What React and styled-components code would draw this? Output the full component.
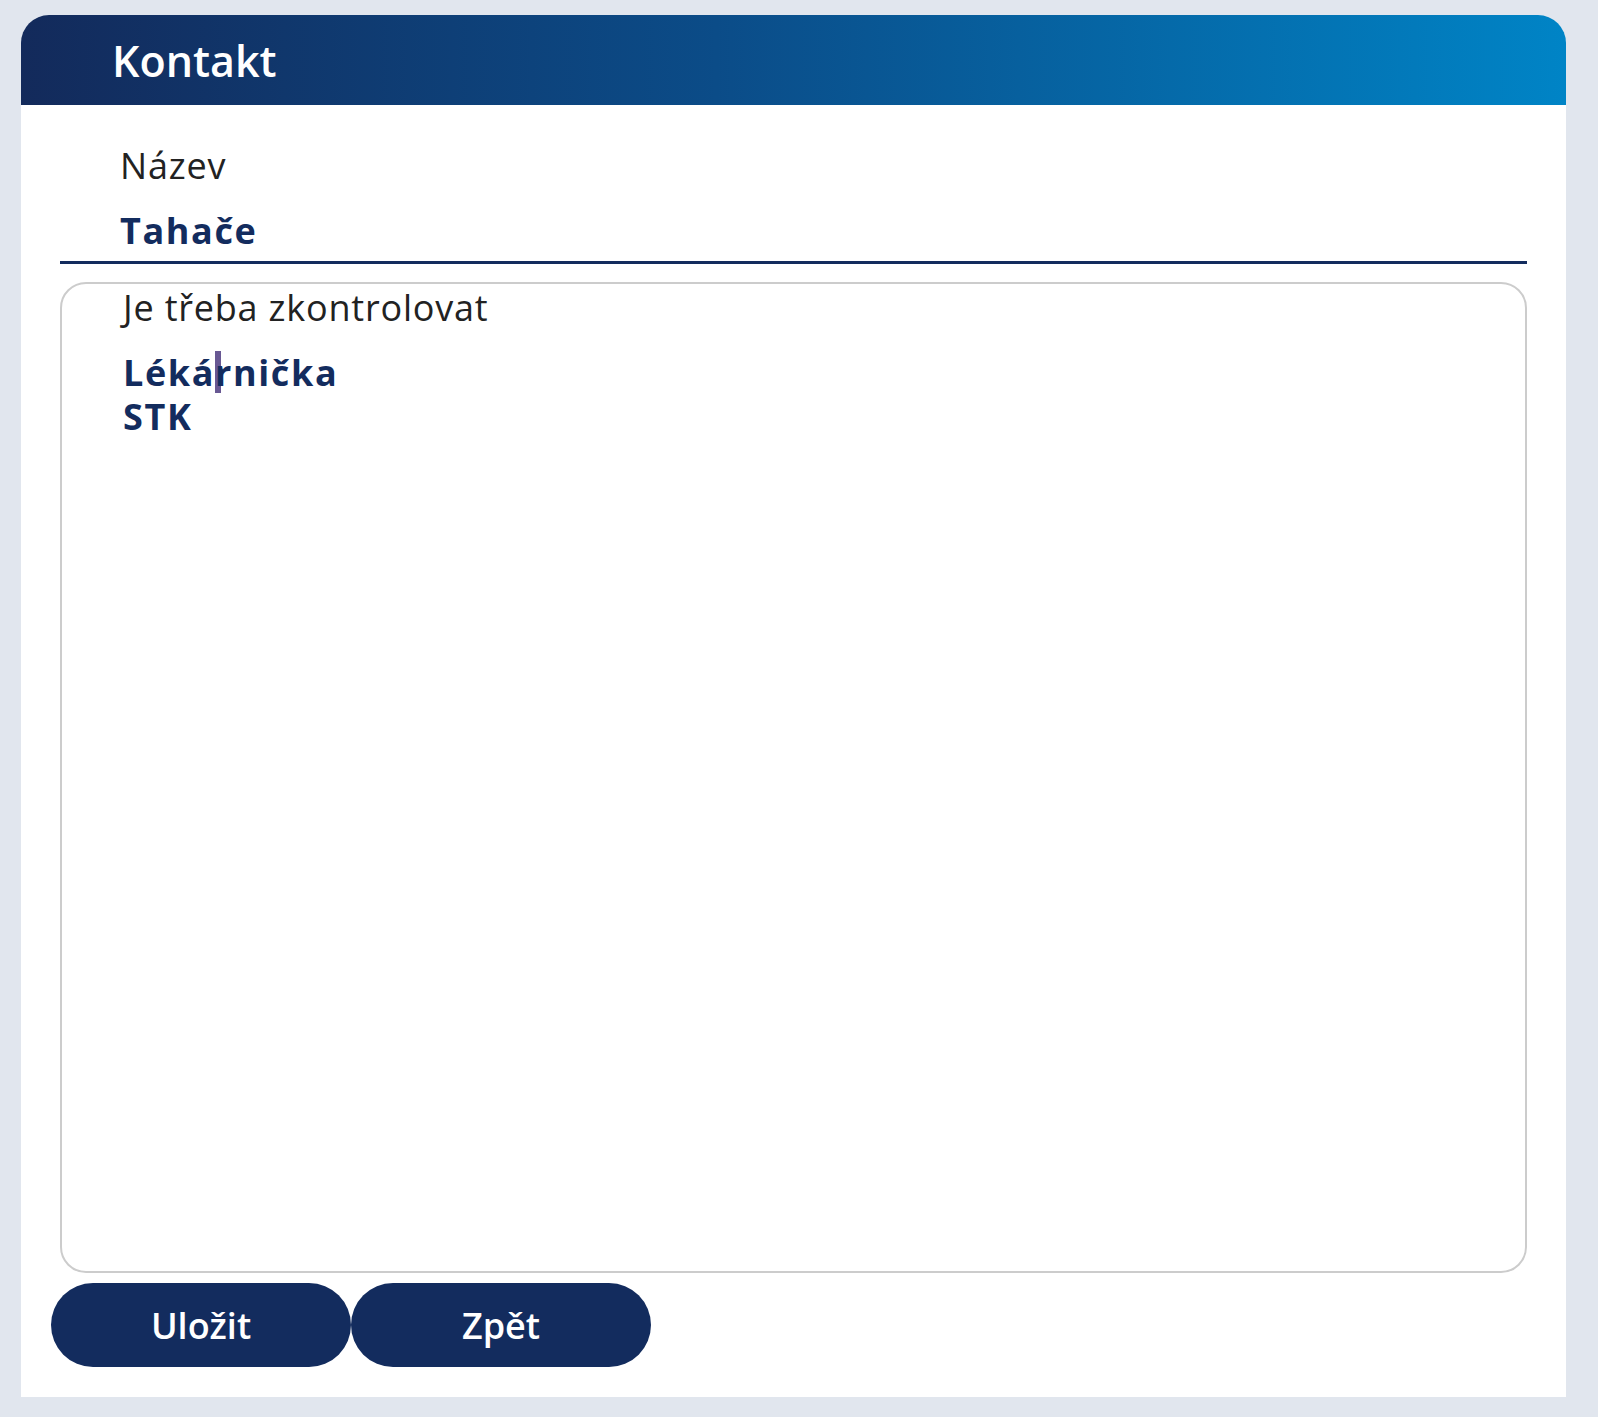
import React from "react";
import styled, { createGlobalStyle } from "styled-components";

const Global = createGlobalStyle`
  html, body {
    margin: 0;
    padding: 0;
    background: #e1e6ee;
    font-family: "Open Sans", "Noto Sans", "DejaVu Sans", sans-serif;
  }
  * { box-sizing: border-box; }
`;

const Page = styled.div`
  padding: 15px 32px 20px 21px;
  min-height: 1417px;
`;

const Card = styled.div`
  background: #ffffff;
  border-radius: 28px 28px 0 0;
  overflow: hidden;
  padding-bottom: 30px;
`;

const Header = styled.div`
  height: 90px;
  display: flex;
  align-items: center;
  padding: 3px 0 0 91px;
  background: linear-gradient(90deg, #132a5b 0%, #0b4c88 45%, #0084c6 100%);
`;

const Title = styled.h1`
  margin: 0;
  font-size: 43px;
  font-weight: 600;
  color: #ffffff;
  line-height: 1.362;
`;

const Body = styled.div`
  padding-top: 37px;
`;

const Field = styled.div`
  margin: 0 39px;
  padding: 0 0 8px 60px;
  border-bottom: 3px solid #132c5e;
`;

const Label = styled.div`
  font-size: 36px;
  font-weight: 400;
  letter-spacing: 0.8px;
  line-height: 48px;
  color: #222222;
`;

const Value = styled.div`
  margin-top: 19px;
  font-size: 36px;
  font-weight: 700;
  letter-spacing: 1.6px;
  line-height: 44px;
  color: #132c5e;
`;

const Box = styled.div`
  margin: 18px 39px 0;
  height: 991px;
  border: 2px solid #cccccc;
  border-radius: 26px;
  padding: 0 0 0 61px;
`;

const Caret = styled.span`
  display: inline-block;
  width: 6px;
  height: 42px;
  margin: 0 -6px 0 0;
  vertical-align: top;
  background: #685893;
`;

const Actions = styled.div`
  display: flex;
  margin-top: 10px;
  padding-left: 30px;
`;

const Button = styled.button`
  width: 300px;
  height: 84px;
  border: none;
  border-radius: 42px;
  background: #132c5e;
  color: #ffffff;
  font-family: "Open Sans", "Noto Sans", sans-serif;
  font-size: 36px;
  font-weight: 600;
  cursor: pointer;
  padding: 0;
`;

export default function App() {
  return (
    <>
      <Global />
      <Page>
        <Card>
          <Header>
            <Title>Kontakt</Title>
          </Header>
          <Body>
            <Field>
              <Label>Název</Label>
              <Value>Tahače</Value>
            </Field>
            <Box>
              <Label>Je třeba zkontrolovat</Label>
              <Value>
                Léká<Caret />rnička
                <br />
                STK
              </Value>
            </Box>
            <Actions>
              <Button>Uložit</Button>
              <Button>Zpět</Button>
            </Actions>
          </Body>
        </Card>
      </Page>
    </>
  );
}
